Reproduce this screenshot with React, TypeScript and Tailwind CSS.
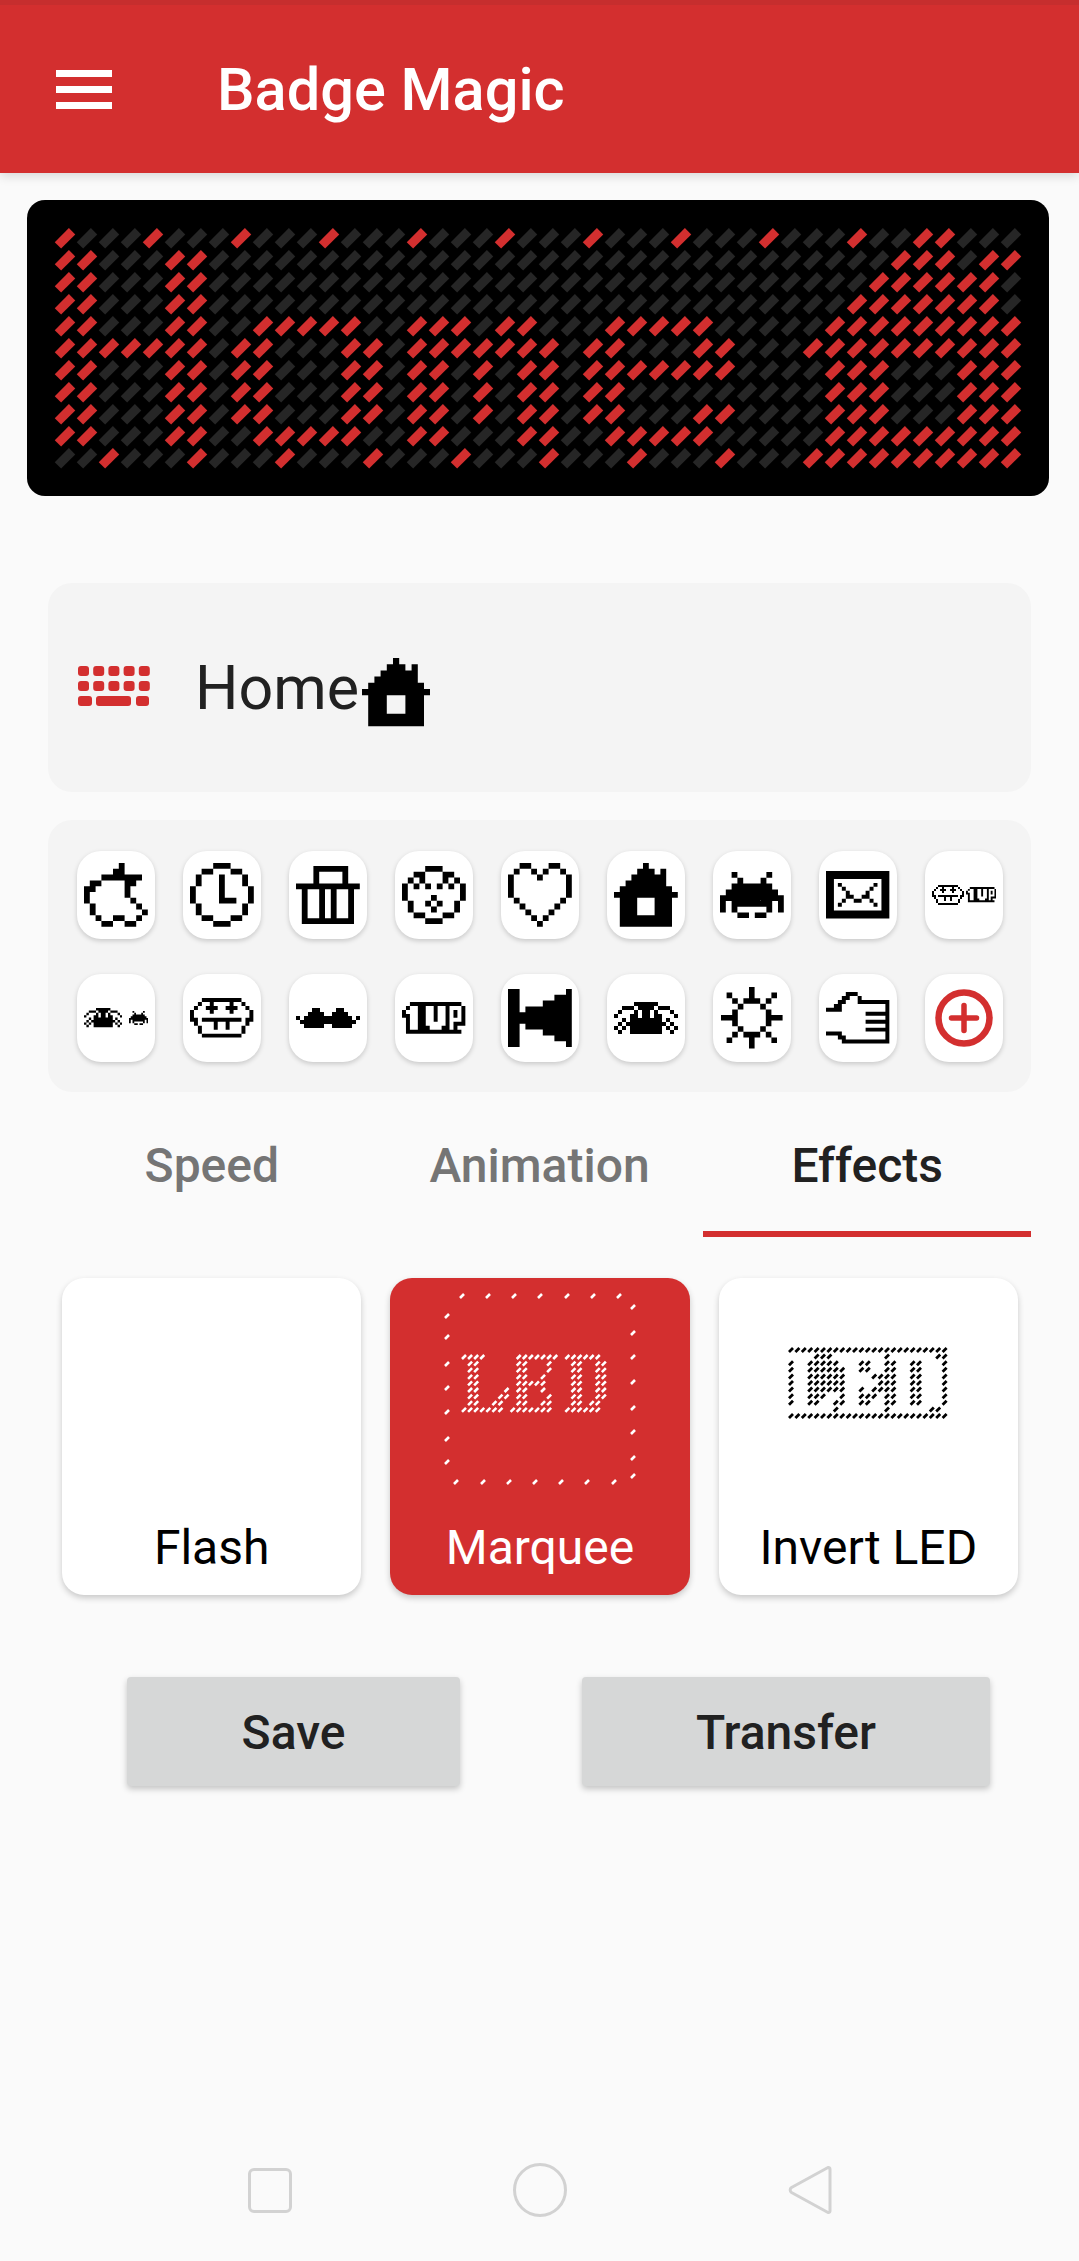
import React from 'react';

const RED = '#d32f2f';

// lit LEDs per row of the 44x11 badge preview
const LIT: number[][] = [
  [0, 4, 8, 12, 16, 20, 24, 28, 32, 36, 39, 40],
  [0, 1, 5, 6, 38, 39, 40, 42, 43],
  [0, 1, 5, 6, 37, 38, 39, 40, 41, 42],
  [0, 1, 5, 6, 36, 37, 38, 39, 40, 41, 42],
  [0, 1, 5, 6, 9, 10, 11, 12, 13, 16, 17, 18, 20, 21, 25, 26, 27, 28, 29, 35, 36, 37, 38, 39, 40, 41, 42, 43],
  [0, 1, 2, 3, 4, 5, 6, 8, 9, 13, 14, 16, 17, 18, 19, 20, 21, 22, 24, 25, 29, 30, 34, 35, 36, 37, 38, 39, 40, 41, 42, 43],
  [0, 1, 5, 6, 8, 9, 13, 14, 16, 17, 19, 21, 22, 24, 25, 26, 27, 28, 29, 30, 35, 36, 37, 41, 42, 43],
  [0, 1, 5, 6, 8, 9, 13, 14, 16, 17, 19, 21, 22, 24, 25, 35, 36, 37, 41, 42, 43],
  [0, 1, 5, 6, 8, 9, 13, 14, 16, 17, 19, 21, 22, 24, 25, 29, 30, 35, 36, 37, 41, 42, 43],
  [0, 1, 5, 6, 9, 10, 11, 12, 13, 16, 17, 21, 22, 25, 26, 27, 28, 29, 35, 36, 37, 38, 39, 40, 41, 42, 43],
  [2, 6, 10, 14, 18, 22, 26, 30, 34, 35, 36, 37, 38, 39, 40, 41, 42, 43],
];

const APPLE = ['......#....', '.....##....', '...#######.', '.##....##..', '##.....#...', '#......#...', '#.......#..', '.#.......#.', '.#........#', '..#..##..#.', '...##..##..'];
const CLOCK = ['....###....', '..##...##..', '.#...#...#.', '.#...#...#.', '#....#....#', '#....#....#', '#....###..#', '.#.......#.', '.#.......#.', '..##...##..', '....###....'];
const BASKET = ['...######..', '...#....#..', '...#....#..', '###########', '.#..#.#..#.', '.#..#.#..#.', '.#..#.#..#.', '.#..#.#..#.', '.#..#.#..#.', '.#########.'];
const FACE = ['....###....', '..##...##..', '.#.#...#.#.', '#.#.#.#.#.#', '#.........#', '#....#....#', '.#..#.#..#.', '.#...#...#.', '..##...##..', '....###....'];
const HEART = ['..##...##..', '.#..#.#..#.', '#....#....#', '#.........#', '#.........#', '#.........#', '.#.......#.', '..#.....#..', '...#...#...', '....#.#....', '.....#.....'];
const HOUSE = ['.....#.....', '....###.#..', '...######..', '..#######..', '.#########.', '###########', '.###...###.', '.###...###.', '.###...###.', '.#########.', '.#########.'];
const INVADER = ['..#.....#..', '...#...#...', '..#######..', '.#########.', '###########', '#.#######.#', '#.#.....#.#', '...##.##...'];
const ENVELOPE = ['################', '################', '##............##', '##.#........#.##', '##..#......#..##', '##...#....#...##', '##...##..##...##', '##..#..##..#..##', '##.#........#.##', '##............##', '################', '################'];
const MUSHROOM = ['...##########...', '..#..#....#..#..', '.#..###..###..#.', '#....#....#....#', '#..............#', '##.##########.##', '.#....#..#....#.', '..#...#..#...#..', '..#..........#..', '...##########...'];
const ONEUP = ['..#############.', '.#..##..#..#...#', '#...##..#..#.#.#', '##..##..#..#.#.#', '.#..##..#..#...#', '.#..##.....#.###', '.#..###...##.#..', '.##############.'];
const SPIDER = ['.....######.....', '..###.####.###..', '.#...#.##.#...#.', '#...##.##.##...#', '..#.########.#..', '.#.##########.#.', '#.#.########.#.#', '.#..########..#.'];
const MOUSTACHE = ['....##....##....', '...####..####...', '#.############.#', '.##############.', '..#####..#####..'];
const SPEAKER = ['##........#', '##......###', '##....#####', '##.########', '###########', '###########', '##.########', '##....#####', '##......###', '##........#'];
const SUN = ['.....#.....', '.#...#...#.', '..#.###.#..', '...#...#...', '..#.....#..', '###.....###', '..#.....#..', '...#...#...', '..#.###.#..', '.#...#...#.', '.....#.....'];
const HAND = [
  '.....###........',
  '....##..#.......',
  '...##...########',
  '..##...........#',
  '####...........#',
  '..........######',
  '...............#',
  '..........######',
  '...............#',
  '..........######',
  '####...........#',
  '...##..........#',
  '....############',
];

const LED_TEXT = [
  '####.....#######.######..',
  '.##......##...#...##..##.',
  '.##......##...#...##..##.',
  '.##......##..#....##..##.',
  '.##......#####....##..##.',
  '.##....#.##..#....##..##.',
  '.##...##.##...#...##..##.',
  '.##..##..##..##...##.##..',
  '#######.#######..######..',
];
const INVERT_TEXT = [
  '#########################',
  '....###........#.......##',
  '#..#####...##..##..##...#',
  '#..######..##..##..##...#',
  '#..######....####..##...#',
  '#..######.....###..##...#',
  '#..######..#.####..##...#',
  '#..###..#..###.##..##...#',
  '#..##..##..##..##..##...#',
  '.......#.......#......##.',
  '#########################',
];

const MARQUEE_TOP = [19, 45, 71, 97, 124, 150, 176];
const MARQUEE_RIGHT = [15, 41, 65, 90, 116, 140, 166, 184];
const MARQUEE_BOTTOM = [13, 40, 66, 92, 118, 144, 171];
const MARQUEE_LEFT = [24, 45, 72, 96, 120, 147, 170];

function Pixels({ rows, size }: { rows: string[]; size: number }) {
  const w = rows[0].length;
  let d = '';
  rows.forEach((row, y) => {
    row.split('').forEach((c, x) => {
      if (c === '#') d += `M${x} ${y}h1v1h-1z`;
    });
  });
  return (
    <svg width={w * size} height={rows.length * size} viewBox={`0 0 ${w} ${rows.length}`} className="shrink-0">
      <path d={d} fill="#000" />
    </svg>
  );
}

function Tile({ children }: { children: React.ReactNode }) {
  return (
    <div className="w-[78px] h-full rounded-[24px] bg-white shadow-[0_2px_5px_rgba(0,0,0,0.18)] flex items-center justify-center">
      {children}
    </div>
  );
}

function dashes(rows: string[], x0: number, y0: number, px: number, py: number) {
  let d = '';
  rows.forEach((row, y) => {
    row.split('').forEach((c, x) => {
      if (c === '#') d += `M${x0 + x * px - 2} ${y0 + y * py + 2}l4 -4`;
    });
  });
  return d;
}

function MarqueeIcon() {
  let border = dashes(LED_TEXT, 21, 65, 6.08, 6.6);
  MARQUEE_TOP.forEach((x) => { border += `M${x - 2} 6l4 -4`; });
  MARQUEE_RIGHT.forEach((y) => { border += `M188 ${y + 2}l4 -4`; });
  MARQUEE_BOTTOM.forEach((x) => { border += `M${x - 2} 192l4 -4`; });
  MARQUEE_LEFT.forEach((y) => { border += `M2 ${y + 2}l4 -4`; });
  return (
    <svg width="194" height="194" viewBox="0 0 194 194">
      <path d={border} stroke="#fff" strokeWidth="2.6" fill="none" />
    </svg>
  );
}

function InvertIcon() {
  return (
    <svg width="194" height="194" viewBox="0 0 194 194">
      <path d={dashes(INVERT_TEXT, 20, 58, 6.4, 6.6)} stroke="#000" strokeWidth="2.8" fill="none" />
    </svg>
  );
}

function EffectCard({ label, active, children }: { label: string; active?: boolean; children?: React.ReactNode }) {
  return (
    <div className={`h-[317px] rounded-[22px] shadow-[0_3px_6px_rgba(0,0,0,0.2)] flex flex-col items-center ${active ? 'bg-[#d32f2f] text-white' : 'bg-white text-black'}`}>
      <div className="h-[194px] mt-[14px] shrink-0">{children}</div>
      <span className="mt-[35px] text-[48px] leading-[54px]">{label}</span>
    </div>
  );
}

export default function App() {
  return (
    <div className="relative w-full h-[2261px] bg-[#fafafa] flex flex-col font-[Roboto,sans-serif] overflow-hidden">
      <header className="h-[173px] shrink-0 bg-[#d32f2f] shadow-[0_3px_10px_rgba(0,0,0,0.14)] flex flex-col">
        <div className="h-[5px] bg-[#c62e2e]" />
        <div className="flex-1 flex items-center">
          <div className="ml-[56px] w-[56px] flex flex-col gap-[9px]">
            <div className="h-[7px] bg-white" />
            <div className="h-[7px] bg-white" />
            <div className="h-[7px] bg-white" />
          </div>
          <h1 className="ml-[105px] mt-[3px] text-[59.5px] leading-none font-medium text-white">Badge Magic</h1>
        </div>
      </header>

      <div className="mt-[27px] ml-[27px] w-[1022px] h-[296px] shrink-0 rounded-[18px] bg-black">
        <svg width="1022" height="296" viewBox="0 0 1022 296">
          {LIT.map((lit, r) =>
            Array.from({ length: 44 }).map((_, c) => (
              <rect
                key={`${r}-${c}`}
                x={38 + c * 22 - 10}
                y={38.3 + r * 22 - 4.5}
                width="20"
                height="9"
                fill={lit.includes(c) ? RED : '#262626'}
                transform={`rotate(-45 ${38 + c * 22} ${38.3 + r * 22})`}
              />
            )),
          )}
        </svg>
      </div>

      <div className="mt-[87px] mx-[48px] h-[209px] shrink-0 rounded-[24px] bg-[#f4f4f4] flex items-center pb-[4px]">
        <svg className="ml-[30px]" width="72" height="40" viewBox="0 0 72 40" fill={RED}>
          {[0, 1, 2, 3, 4].map((i) => <rect key={`a${i}`} x={i * 15.2} y="0" width="11" height="10" rx="3" />)}
          {[0, 1, 2, 3, 4].map((i) => <rect key={`b${i}`} x={i * 15.2} y="15" width="11" height="10" rx="3" />)}
          <rect x="0" y="30" width="14" height="10" rx="3" />
          <rect x="18" y="30" width="35" height="10" rx="3" />
          <rect x="58" y="30" width="13" height="10" rx="3" />
        </svg>
        <span className="ml-[45px] mt-[5px] text-[61px] leading-none text-[#212121]">Home</span>
        <div className="ml-[3px] mt-[14px]"><Pixels rows={HOUSE} size={6.2} /></div>
      </div>

      <div className="mt-[28px] mx-[48px] h-[272px] shrink-0 rounded-[24px] bg-[#f4f4f4] pt-[31px] pl-[29px] flex flex-col gap-[35px]">
        <div className="h-[88px] flex gap-[28px]">
          <Tile><Pixels rows={APPLE} size={5.8} /></Tile>
          <Tile><Pixels rows={CLOCK} size={5.8} /></Tile>
          <Tile><Pixels rows={BASKET} size={5.8} /></Tile>
          <Tile><Pixels rows={FACE} size={5.8} /></Tile>
          <Tile><Pixels rows={HEART} size={5.8} /></Tile>
          <Tile><Pixels rows={HOUSE} size={5.8} /></Tile>
          <Tile><Pixels rows={INVADER} size={5.8} /></Tile>
          <Tile><Pixels rows={ENVELOPE} size={3.96} /></Tile>
          <Tile>
            <div className="flex items-center gap-[2px]">
              <Pixels rows={MUSHROOM} size={2} />
              <Pixels rows={ONEUP} size={1.9} />
            </div>
          </Tile>
        </div>
        <div className="h-[88px] flex gap-[28px]">
          <Tile>
            <div className="flex items-center gap-[7px]">
              <Pixels rows={SPIDER} size={2.4} />
              <Pixels rows={INVADER} size={1.75} />
            </div>
          </Tile>
          <Tile><Pixels rows={MUSHROOM} size={3.96} /></Tile>
          <Tile><Pixels rows={MOUSTACHE} size={4} /></Tile>
          <Tile><Pixels rows={ONEUP} size={3.96} /></Tile>
          <Tile><Pixels rows={SPEAKER} size={5.8} /></Tile>
          <Tile><Pixels rows={SPIDER} size={4} /></Tile>
          <Tile><Pixels rows={SUN} size={5.6} /></Tile>
          <Tile><Pixels rows={HAND} size={3.96} /></Tile>
          <Tile>
            <svg width="58" height="58" viewBox="0 0 58 58" fill="none" stroke={RED}>
              <circle cx="29" cy="29" r="25.5" strokeWidth="6.5" />
              <path d="M16.5 29h25M29 16.5v25" strokeWidth="5.5" strokeLinecap="round" />
            </svg>
          </Tile>
        </div>
      </div>

      <div className="mx-[48px] h-[145px] shrink-0 grid grid-cols-3 text-[48px] leading-none font-medium">
        <div className="flex items-center justify-center pt-[2px] text-[#757575]">Speed</div>
        <div className="flex items-center justify-center pt-[2px] text-[#757575]">Animation</div>
        <div className="flex items-center justify-center pt-[8px] text-[#212121] border-b-[6px] border-[#d32f2f]">Effects</div>
      </div>

      <div className="mt-[41px] ml-[62px] w-[956px] shrink-0 grid grid-cols-3 gap-[29px]">
        <EffectCard label="Flash" />
        <EffectCard label="Marquee" active><MarqueeIcon /></EffectCard>
        <EffectCard label="Invert LED"><InvertIcon /></EffectCard>
      </div>

      <div className="mt-[82px] ml-[127px] flex gap-[122px] shrink-0">
        <button className="w-[333px] h-[109px] pt-[2px] rounded-[4px] bg-[#d6d7d7] shadow-[0_3px_6px_rgba(0,0,0,0.22)] text-[48px] font-medium text-[#212121]">Save</button>
        <button className="w-[408px] h-[109px] pt-[2px] rounded-[4px] bg-[#d6d7d7] shadow-[0_3px_6px_rgba(0,0,0,0.22)] text-[48px] font-medium text-[#212121]">Transfer</button>
      </div>

      <div className="mt-auto mb-[44px] pl-[248px] h-[54px] flex items-center">
        <div className="w-[44px] h-[45px] rounded-[6px] border-[3px] border-[#d2d2d2]" />
        <div className="ml-[221px] w-[54px] h-[54px] rounded-full border-[3px] border-[#d2d2d2]" />
        <svg className="ml-[221px]" width="44" height="54" viewBox="0 0 44 54" fill="none">
          <path d="M40 4.5 3.5 24.5a3 3 0 0 0 0 5L40 49.5a1.8 1.8 0 0 0 2-1.5V6a1.8 1.8 0 0 0-2-1.5Z" stroke="#d2d2d2" strokeWidth="3" strokeLinejoin="round" />
        </svg>
      </div>
    </div>
  );
}
